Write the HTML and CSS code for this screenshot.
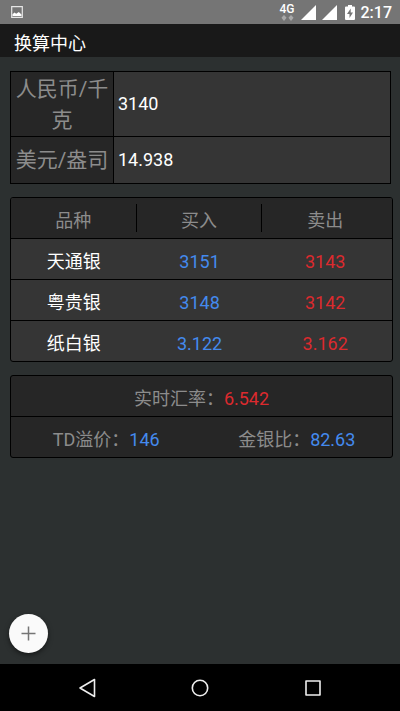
FILE: index.html
```
<!DOCTYPE html>
<html lang="zh-CN">
<head>
  <meta charset="UTF-8">
  <meta name="viewport" content="width=device-width, initial-scale=1.0">
  <title>换算中心</title>
  <link rel="stylesheet" href="styles.css">
</head>
<body>
  <!-- Status bar -->
  <div class="status-bar">
    <svg class="picture-icon" width="12" height="12" viewBox="0 0 12 12">
      <path d="M0.7 0.7h10.6v10.6h-10.6z" fill="none" stroke="#e6e6e6" stroke-width="1.2"/>
      <path d="M1.5 10V8.200L3.500 6.500l1.700 1.300L7.800 6l2.700 2.500V10z" fill="#fff"/>
    </svg>
    <div class="status-right">
      <div class="network">
        <span>4G</span>
        <svg width="13" height="6" viewBox="0 0 13 6" fill="#a8a8a8">
          <path d="M3 0l2.500 2.500L5 3.500 3 6 1 3.500 0.500 2.500zM10 0l2.500 2.500L12 3.500 10 6 8 3.500 7.500 2.500z"/>
        </svg>
      </div>
      <svg class="signal" width="15" height="15" viewBox="0 0 15 15"><path d="M15 0v15H0z" fill="#fff"/></svg>
      <svg class="signal" width="15" height="15" viewBox="0 0 15 15"><path d="M15 0v15H0z" fill="#fff"/></svg>
      <svg class="battery" width="10" height="15" viewBox="0 0 10 15">
        <path d="M3 0h4v1.500h2q1 0 1 1V14q0 1-1 1H1q-1 0-1-1V2.500q0-1 1-1h2z" fill="#fff"/>
        <path d="M5.700 3.500L2 9h2.500v4L8 7.500H5.700z" fill="#757575"/>
      </svg>
      <span class="clock">2:17</span>
    </div>
  </div>

  <header class="title-bar">
    <h1>换算中心</h1>
  </header>

  <main class="content">
    <!-- Converter -->
    <form class="converter">
      <div class="converter-row">
        <label for="cny">人民币/千克</label>
        <input type="text" id="cny" name="cny" value="3140">
      </div>
      <div class="converter-row">
        <label for="usd">美元/盎司</label>
        <input type="text" id="usd" name="usd" value="14.938">
      </div>
    </form>

    <!-- Prices -->
    <table class="price-table">
      <thead>
        <tr>
          <th><span>品种</span></th>
          <th><span>买入</span></th>
          <th><span>卖出</span></th>
        </tr>
      </thead>
      <tbody>
        <tr>
          <td>天通银</td>
          <td class="blue">3151</td>
          <td class="red">3143</td>
        </tr>
        <tr>
          <td>粤贵银</td>
          <td class="blue">3148</td>
          <td class="red">3142</td>
        </tr>
        <tr>
          <td>纸白银</td>
          <td class="blue">3.122</td>
          <td class="red">3.162</td>
        </tr>
      </tbody>
    </table>

    <!-- Rate summary -->
    <section class="summary">
      <div class="summary-row">
        <div>实时汇率：<span class="red">6.542</span></div>
      </div>
      <div class="summary-row">
        <div>TD溢价：<span class="blue">146</span></div>
        <div>金银比：<span class="blue">82.63</span></div>
      </div>
    </section>

    <button type="button" class="add-button" aria-label="添加">
      <svg width="15" height="15" viewBox="0 0 15 15"><path d="M7.500 0.500v14M0.500 7.500h14" stroke="#757575" stroke-width="1.500"/></svg>
    </button>
  </main>

  <!-- Navigation bar -->
  <nav class="nav-bar">
    <button type="button" aria-label="返回">
      <svg width="18" height="20" viewBox="0 0 18 20"><path d="M16.500 1.500v17L2 10z" fill="none" stroke="#eee" stroke-width="1.600" stroke-linejoin="round"/></svg>
    </button>
    <button type="button" aria-label="主页">
      <svg width="18" height="18" viewBox="0 0 18 18"><circle cx="9" cy="9" r="7.700" fill="none" stroke="#eee" stroke-width="1.600"/></svg>
    </button>
    <button type="button" aria-label="最近">
      <svg width="16" height="16" viewBox="0 0 16 16"><path d="M1 1h14v14H1z" fill="none" stroke="#eee" stroke-width="1.600" stroke-linejoin="round"/></svg>
    </button>
  </nav>
</body>
</html>
```

FILE: styles.css
```
* {
  box-sizing: border-box;
}

body {
  font-family: Roboto, 'Noto Sans CJK SC', sans-serif;
  font-size: 18px;
  margin: 0;
  background: #2c3030;
  color: #fff;
  display: flex;
  flex-direction: column;
  min-height: 100vh;
}

button {
  border: none;
  padding: 0;
  cursor: pointer;
}

svg {
  display: block;
}

/* Status bar */
.status-bar {
  display: flex;
  justify-content: space-between;
  align-items: center;
  height: 24px;
  padding: 0 8px 0 11px;
  background: #757575;
}

.status-right {
  display: flex;
  align-items: center;
}

.network {
  display: flex;
  flex-direction: column;
  align-items: center;
  font-size: 12px;
  font-weight: 500;
  line-height: 12px;
}

.signal {
  margin-left: 6px;
}

.battery {
  margin: 0 6px 0 8px;
}

.clock {
  font-size: 16px;
  font-weight: 500;
  line-height: 24px;
  padding-top: 2px;
}

/* Title */
.title-bar {
  height: 33px;
  padding: 0 14px;
  background: #191919;
}

.title-bar h1 {
  margin: 0;
  font-size: 18px;
  font-weight: normal;
  line-height: 39px;
}

.content {
  flex: 1;
  display: flex;
  flex-direction: column;
  gap: 13px;
  padding: 14px 7px 11px 9px;
}

/* Converter */
.converter,
.price-table,
.summary {
  margin-left: 1px;
}

.converter {
  margin-right: 2px;
  border: 1px solid #000;
  background: #353535;
}

.converter-row {
  display: flex;
}

.converter-row + .converter-row {
  border-top: 1px solid #000;
}

.converter-row label {
  flex: none;
  width: 103px;
  padding: 2px 2px 0;
  border-right: 1px solid #000;
  background: #262626;
  color: #8c8c8c;
  font-size: 21px;
  line-height: 31px;
  text-align: center;
}

.converter-row + .converter-row label {
  padding: 8px 2px 7px;
}

.converter-row input {
  flex: 1;
  min-width: 0;
  padding: 0 4px 2px;
  border: none;
  outline: none;
  background: transparent;
  color: #fff;
  font-family: inherit;
  font-size: 18px;
}

/* Prices */
.price-table,
.summary {
  border: 1px solid #000;
  border-radius: 3px;
  overflow: hidden;
}

.price-table {
  width: calc(100% - 1px);
  table-layout: fixed;
  border-spacing: 0;
  background: #353535;
  text-align: center;
}

.price-table th {
  width: 33%;
  padding: 6px 0;
  background: #262626;
  color: #8c8c8c;
  font-weight: normal;
}

.price-table th span {
  display: block;
  height: 28px;
  line-height: 34px;
  border-right: 1px solid #000;
}

.price-table th:last-child {
  width: auto;
}

.price-table th:last-child span {
  border-right: none;
}

.price-table td {
  padding: 5px 0 0;
  border-top: 1px solid #000;
  line-height: 35px;
}

.price-table th:last-child,
.price-table td:last-child {
  padding-right: 4px;
}

.blue {
  color: #448aee;
}

.red {
  color: #dc2a2e;
}

/* Summary */
.summary {
  background: #262626;
  color: #8c8c8c;
}

.summary-row {
  display: flex;
  padding-top: 5px;
  text-align: center;
  line-height: 35px;
}

.summary-row + .summary-row {
  border-top: 1px solid #000;
}

.summary-row div {
  flex: 1;
}

/* Add button */
.add-button {
  display: flex;
  justify-content: center;
  align-items: center;
  width: 39px;
  height: 39px;
  margin-top: auto;
  border-radius: 50%;
  background: #fafafa;
  box-shadow: 0 2px 5px rgba(0, 0, 0, 0.5);
}

/* Navigation bar */
.nav-bar {
  display: flex;
  justify-content: center;
  gap: 13px;
  height: 47px;
  background: #000;
}

.nav-bar button {
  display: flex;
  justify-content: center;
  align-items: center;
  width: 100px;
  background: transparent;
}
```
